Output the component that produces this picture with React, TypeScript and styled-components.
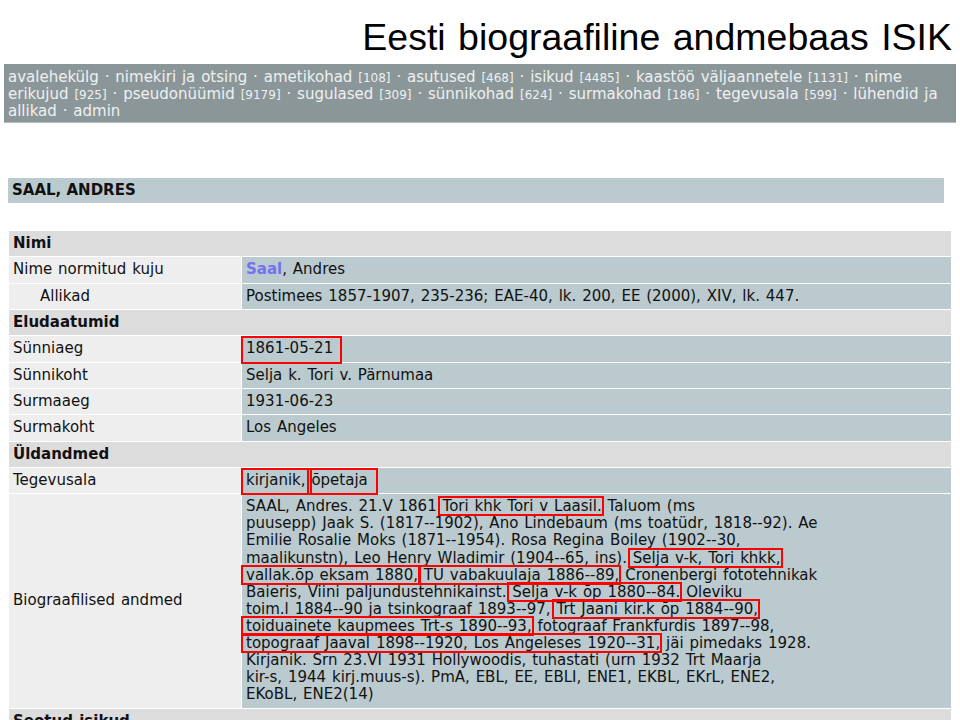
import React from 'react';
import styled, { createGlobalStyle } from 'styled-components';

const GlobalStyle = createGlobalStyle`
  html, body { margin: 0; padding: 0; background: #ffffff; }
  body {
    font-family: "DejaVu Sans", Verdana, sans-serif;
    font-size: 15px;
    word-spacing: 1.1px;
    color: #111111;
  }
`;

const Page = styled.div`
  width: 952px;
  padding: 0 4px 40px;
`;

const Title = styled.h1`
  margin: 16px 4px 6px 0;
  font-family: "Liberation Sans", Arial, sans-serif;
  font-weight: normal;
  font-size: 37.5px;
  line-height: 42px;
  word-spacing: 2px;
  text-align: right;
  color: #000000;
`;

const Nav = styled.nav`
  background: #8b9699;
  color: #eef1f1;
  padding: 5px 4px 2px;
  line-height: 17px;
  border-bottom: 1px solid #b3bcbe;
`;

const NavLink = styled.a`
  color: inherit;
  text-decoration: none;
`;

const Count = styled.span`
  font-size: 12px;
  line-height: 1;
`;

const NameBar = styled.div`
  margin: 55px 12px 0 4px;
  padding: 4px;
  background: #bacace;
  line-height: 17px;
  font-weight: bold;
  word-spacing: 0;
`;

const InfoTable = styled.table`
  margin: 27px 0 0 4px;
  width: 944px;
  border-collapse: separate;
  border-spacing: 1px;
  table-layout: fixed;
`;

const LabelCol = styled.col`
  width: 232px;
`;

const Cell = styled.td`
  padding: 4px 4px 4.34px;
  line-height: 17px;
  vertical-align: middle;
`;

const SectionCell = styled(Cell)`
  background: #dcdcdc;
  font-weight: bold;
`;

const LabelCell = styled(Cell)<{ $indent?: boolean }>`
  background: #eeeeee;
  padding-left: ${(p) => (p.$indent ? '31px' : '4px')};
`;

const ValueCell = styled(Cell)`
  background: #bacace;
`;

const BioText = styled.div`
  line-height: 17.1px;
`;

const NameLink = styled.a`
  color: #7272f2;
  font-weight: bold;
  text-decoration: none;
`;

type MarkKind = 'date' | 'tag' | 'tagNext' | 'start' | 'mid';

const markInsets: Record<MarkKind, [number, number, number, number]> = {
  date: [-3, -9, -7, -5],
  tag: [-3, -6, -6, -5],
  tagNext: [-3, -10, -6, -4],
  start: [-1, -2, -1, -5],
  mid: [-1, -2, -1, 1],
};

const Mark = styled.span<{ $kind: MarkKind }>`
  position: relative;
  &::after {
    content: '';
    position: absolute;
    pointer-events: none;
    border: 2px solid #ff0000;
    top: ${(p) => markInsets[p.$kind][0]}px;
    right: ${(p) => markInsets[p.$kind][1]}px;
    bottom: ${(p) => markInsets[p.$kind][2]}px;
    left: ${(p) => markInsets[p.$kind][3]}px;
  }
`;

const navItems: [string, string?][] = [
  ['avalehekülg'],
  ['nimekiri ja otsing'],
  ['ametikohad', '108'],
  ['asutused', '468'],
  ['isikud', '4485'],
  ['kaastöö väljaannetele', '1131'],
  ['nime erikujud', '925'],
  ['pseudonüümid', '9179'],
  ['sugulased', '309'],
  ['sünnikohad', '624'],
  ['surmakohad', '186'],
  ['tegevusala', '599'],
  ['lühendid ja allikad'],
  ['admin'],
];

type Seg = string | { m: string; k: MarkKind };

const bioLines: Seg[][] = [
  ['SAAL, Andres. 21.V 1861', { m: ' Tori khk Tori v Laasil.', k: 'mid' }, ' Taluom (ms'],
  ['puusepp) Jaak S. (1817--1902), Ano Lindebaum (ms toatüdr, 1818--92). Ae'],
  ['Emilie Rosalie Moks (1871--1954). Rosa Regina Boiley (1902--30,'],
  ['maalikunstn), Leo Henry Wladimir (1904--65, ins).', { m: ' Selja v-k, Tori khkk,', k: 'mid' }],
  [
    { m: 'vallak.õp eksam 1880,', k: 'start' },
    { m: ' TU vabakuulaja 1886--89,', k: 'mid' },
    ' Cronenbergi fototehnikak',
  ],
  ['Baieris, Viini paljundustehnikainst.', { m: ' Selja v-k õp 1880--84.', k: 'mid' }, ' Oleviku'],
  ['toim.l 1884--90 ja tsinkograaf 1893--97,', { m: ' Trt Jaani kir.k õp 1884--90,', k: 'mid' }],
  [{ m: 'toiduainete kaupmees Trt-s 1890--93,', k: 'start' }, ' fotograaf Frankfurdis 1897--98,'],
  [{ m: 'topograaf Jaaval 1898--1920, Los Angeleses 1920--31,', k: 'start' }, ' jäi pimedaks 1928.'],
  ['Kirjanik. Srn 23.VI 1931 Hollywoodis, tuhastati (urn 1932 Trt Maarja'],
  ['kir-s, 1944 kirj.muus-s). PmA, EBL, EE, EBLI, ENE1, EKBL, EKrL, ENE2,'],
  ['EKoBL, ENE2(14)'],
];

function Section({ title }: { title: string }) {
  return (
    <tr>
      <SectionCell colSpan={2}>{title}</SectionCell>
    </tr>
  );
}

function Row({ label, indent, children }: { label: string; indent?: boolean; children: React.ReactNode }) {
  return (
    <tr>
      <LabelCell $indent={indent}>{label}</LabelCell>
      <ValueCell>{children}</ValueCell>
    </tr>
  );
}

export default function App() {
  return (
    <>
      <GlobalStyle />
      <Page>
        <Title>Eesti biograafiline andmebaas ISIK</Title>
        <Nav>
          {navItems.map(([name, count], i) => (
            <React.Fragment key={name}>
              {i > 0 && ' · '}
              <NavLink href="#">{name}</NavLink>
              {count && (
                <>
                  {' '}
                  <Count>[{count}]</Count>
                </>
              )}
            </React.Fragment>
          ))}
        </Nav>

        <NameBar>SAAL, ANDRES</NameBar>

        <InfoTable>
          <colgroup>
            <LabelCol />
            <col />
          </colgroup>
          <tbody>
            <Section title="Nimi" />
            <Row label="Nime normitud kuju">
              <NameLink href="#">Saal</NameLink>, Andres
            </Row>
            <Row label="Allikad" indent>
              Postimees 1857-1907, 235-236; EAE-40, lk. 200, EE (2000), XIV, lk. 447.
            </Row>
            <Section title="Eludaatumid" />
            <Row label="Sünniaeg">
              <Mark $kind="date">1861-05-21</Mark>
            </Row>
            <Row label="Sünnikoht">Selja k. Tori v. Pärnumaa</Row>
            <Row label="Surmaaeg">1931-06-23</Row>
            <Row label="Surmakoht">Los Angeles</Row>
            <Section title="Üldandmed" />
            <Row label="Tegevusala">
              <Mark $kind="tag">kirjanik,</Mark> <Mark $kind="tagNext">õpetaja</Mark>
            </Row>
            <Row label="Biograafilised andmed">
              <BioText>
                {bioLines.map((line, li) => (
                  <React.Fragment key={li}>
                    {li > 0 && <br />}
                    {line.map((seg, si) =>
                      typeof seg === 'string' ? (
                        <React.Fragment key={si}>{seg}</React.Fragment>
                      ) : (
                        <Mark key={si} $kind={seg.k}>
                          {seg.m}
                        </Mark>
                      )
                    )}
                  </React.Fragment>
                ))}
              </BioText>
            </Row>
            <Section title="Seotud isikud" />
            <Row label="Sugulane">Saal, Jaak</Row>
          </tbody>
        </InfoTable>
      </Page>
    </>
  );
}
